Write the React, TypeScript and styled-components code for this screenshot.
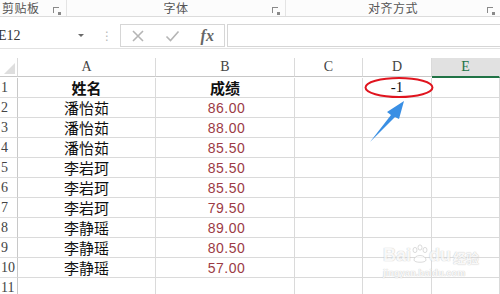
import React from "react";
import styled, { createGlobalStyle } from "styled-components";

const Global = createGlobalStyle`
    html, body {
        margin: 0;
        padding: 0;
        background: #ffffff;
        overflow: hidden;
    }
    body {
        font-family: "Liberation Serif", "Noto Sans CJK SC", serif;
    }
`;

const Page = styled.div`
    position: relative;
    width: 500px;
    height: 294px;
    overflow: hidden;
    background: #ffffff;
`;

const Ribbon = styled.div`
    display: grid;
    grid-template-columns: 67px 219px 1fr;
    height: 16px;
    border-bottom: 1px solid #dcdcdc;
    background: #fcfcfc;
`;

const Group = styled.div<{ $align: "left" | "center"; $last?: boolean }>`
    position: relative;
    display: flex;
    align-items: center;
    justify-content: ${(p) => (p.$align === "left" ? "flex-start" : "center")};
    padding-left: ${(p) => (p.$align === "left" ? "2px" : "0")};
    border-right: ${(p) => (p.$last ? "none" : "1px solid #e4e4e4")};
    font-family: "Noto Sans CJK SC", sans-serif;
    font-size: 12px;
    color: #555;
    letter-spacing: 0.5px;
    line-height: 16px;
    height: 16px;
`;

const Launcher = styled.span`
    position: absolute;
    right: 7px;
    top: 7px;
    width: 6px;
    height: 6px;
    border-top: 1px solid #8a8a8a;
    border-left: 1px solid #8a8a8a;
    box-sizing: border-box;

    &::after {
        content: "";
        position: absolute;
        right: -2px;
        bottom: -2px;
        width: 3px;
        height: 3px;
        background: #8a8a8a;
    }
`;

const FormulaBar = styled.div`
    display: flex;
    align-items: stretch;
    height: 23px;
    margin-top: 7px;
    padding-bottom: 1px;
    border-bottom: 1px solid #e2e2e2;
`;

const NameBox = styled.div`
    position: relative;
    width: 96px;
    display: flex;
    align-items: center;
    margin-left: -2px;
    font-size: 14px;
    color: #333;
`;

const DropArrow = styled.span`
    position: absolute;
    right: 10px;
    top: 10px;
    border-left: 3px solid transparent;
    border-right: 3px solid transparent;
    border-top: 3px solid #6a6a6a;
`;

const Dots = styled.div`
    width: 26px;
    display: flex;
    align-items: center;
    justify-content: center;
    color: #b8b8b8;
    font-size: 12px;
    font-family: "DejaVu Sans", sans-serif;
`;

const ActionBox = styled.div`
    width: 105px;
    display: flex;
    align-items: center;
    justify-content: space-around;
    border: 1px solid #d6d6d6;
    box-sizing: border-box;
    margin-right: 2px;
`;

const Fx = styled.span`
    font-family: "Liberation Serif", serif;
    font-style: italic;
    font-size: 16px;
    font-weight: bold;
    color: #666;
`;

const Input = styled.div`
    flex: 1;
    border: 1px solid #d6d6d6;
    border-right: none;
`;

const Sheet = styled.div`
    display: grid;
    grid-template-columns: 18px 138px 139px 68px 69px 1fr;
    grid-auto-rows: 20px;
    margin-top: 9px;
`;

const HeadCell = styled.div<{ $active?: boolean }>`
    height: 18px;
    display: flex;
    align-items: center;
    justify-content: center;
    font-size: 14px;
    color: ${(p) => (p.$active ? "#217346" : "#444")};
    background: ${(p) => (p.$active ? "#e1e1e1" : "#ffffff")};
    border-right: 1px solid ${(p) => (p.$active ? "#e1e1e1" : "#dadada")};
    border-bottom: ${(p) => (p.$active ? "2px solid #217346" : "1px solid #c8c8c8")};
`;

const Corner = styled.div`
    position: relative;
    height: 18px;
    border-right: 1px solid #dadada;
    border-bottom: 1px solid #c8c8c8;

    &::after {
        content: "";
        position: absolute;
        right: 2px;
        bottom: 2px;
        border-left: 11px solid transparent;
        border-bottom: 11px solid #dedede;
    }
`;

const RowHead = styled.div`
    display: flex;
    align-items: center;
    padding-left: 1px;
    font-size: 14px;
    color: #444;
    border-right: 1px solid #c8c8c8;
    border-bottom: 1px solid #e0e0e0;
    overflow: hidden;
    white-space: nowrap;
`;

const Cell = styled.div<{ $kind?: "name" | "score" | "title" | "plain" }>`
    display: flex;
    align-items: center;
    justify-content: center;
    border-right: 1px solid #dadada;
    border-bottom: 1px solid #dadada;
    font-family: ${(p) =>
        p.$kind === "score"
            ? `"Liberation Sans", sans-serif`
            : p.$kind === "plain"
            ? `"Liberation Serif", serif`
            : `"Noto Sans CJK SC", sans-serif`};
    font-size: ${(p) => (p.$kind === "score" ? "14px" : "15px")};
    font-weight: ${(p) => (p.$kind === "title" ? 700 : 400)};
    color: ${(p) => (p.$kind === "score" ? "#9c3b45" : "#111")};
    padding-left: ${(p) => (p.$kind === "score" ? "3px" : "0")};
    letter-spacing: ${(p) => (p.$kind === "score" ? "0.5px" : "0")};
`;

const Overlay = styled.svg`
    position: absolute;
    left: 0;
    top: 0;
    pointer-events: none;
`;

const Watermark = styled.div`
    position: absolute;
    left: 383px;
    top: 244px;
    display: flex;
    flex-direction: column;
    align-items: flex-start;
    color: rgba(255, 255, 255, 0.9);
    font-family: "Liberation Sans", sans-serif;
    text-shadow: 0 0 1px #bdbdbd, 0 0 1px #bdbdbd;
    opacity: 0.75;
`;

const MarkTop = styled.div`
    display: flex;
    align-items: flex-end;
    font-size: 18px;
    font-weight: bold;
    line-height: 1;
`;

const MarkCn = styled.span`
    font-family: "Noto Sans CJK SC", sans-serif;
    font-size: 13px;
    margin-left: 2px;
`;

const MarkUrl = styled.div`
    font-size: 9px;
    font-weight: bold;
    margin-top: 4px;
    letter-spacing: 0.2px;
`;

const rows: [string, string][] = [
    ["潘怡茹", "86.00"],
    ["潘怡茹", "88.00"],
    ["潘怡茹", "85.50"],
    ["李岩珂", "85.50"],
    ["李岩珂", "85.50"],
    ["李岩珂", "79.50"],
    ["李静瑶", "89.00"],
    ["李静瑶", "80.50"],
    ["李静瑶", "57.00"],
];

export default function App() {
    return (
        <Page>
            <Global />
            <Ribbon>
                <Group $align="left">
                    剪贴板
                    <Launcher />
                </Group>
                <Group $align="center">
                    字体
                    <Launcher />
                </Group>
                <Group $align="center" $last>
                    对齐方式
                    <Launcher />
                </Group>
            </Ribbon>

            <FormulaBar>
                <NameBox>
                    E12
                    <DropArrow />
                </NameBox>
                <Dots>⋮</Dots>
                <ActionBox>
                    <svg width="14" height="14" viewBox="0 0 14 14">
                        <path d="M2 2 L12 12 M12 2 L2 12" stroke="#b5b5b5" strokeWidth="1.6" fill="none" />
                    </svg>
                    <svg width="15" height="14" viewBox="0 0 15 14">
                        <path d="M1.5 7.5 L5.5 11.5 L13.5 2.5" stroke="#b5b5b5" strokeWidth="1.6" fill="none" />
                    </svg>
                    <Fx>fx</Fx>
                </ActionBox>
                <Input />
            </FormulaBar>

            <Sheet>
                <Corner />
                <HeadCell>A</HeadCell>
                <HeadCell>B</HeadCell>
                <HeadCell>C</HeadCell>
                <HeadCell>D</HeadCell>
                <HeadCell $active>E</HeadCell>

                <RowHead>1</RowHead>
                <Cell $kind="title">姓名</Cell>
                <Cell $kind="title">成绩</Cell>
                <Cell />
                <Cell $kind="plain">-1</Cell>
                <Cell />

                {rows.map(([name, score], i) => (
                    <React.Fragment key={i}>
                        <RowHead>{i + 2}</RowHead>
                        <Cell $kind="name">{name}</Cell>
                        <Cell $kind="score">{score}</Cell>
                        <Cell />
                        <Cell />
                        <Cell />
                    </React.Fragment>
                ))}

                <RowHead>11</RowHead>
                <Cell />
                <Cell />
                <Cell />
                <Cell />
                <Cell />
            </Sheet>

            <Overlay width="500" height="294" viewBox="0 0 500 294">
                <ellipse cx="399" cy="87.5" rx="33.5" ry="9.5" fill="none" stroke="#e0141e" strokeWidth="2" />
                <polygon
                    points="370,142 391,115 387,112 404,101 399,119 395,117"
                    fill="#3a8fe4"
                />
            </Overlay>

            <Watermark>
                <MarkTop>
                    Bai
                    <svg width="18" height="20" viewBox="0 0 18 20">
                        <g fill="#ffffff" stroke="#c4c4c4" strokeWidth="0.8">
                            <ellipse cx="4" cy="6" rx="2" ry="2.6" />
                            <ellipse cx="9" cy="3.5" rx="2" ry="2.6" />
                            <ellipse cx="14" cy="6" rx="2" ry="2.6" />
                            <path d="M3 16 C3 10 15 10 15 16 C15 19 3 19 3 16 Z" />
                        </g>
                    </svg>
                    du
                    <MarkCn>经验</MarkCn>
                </MarkTop>
                <MarkUrl>jingyan.baidu.com</MarkUrl>
            </Watermark>
        </Page>
    );
}
